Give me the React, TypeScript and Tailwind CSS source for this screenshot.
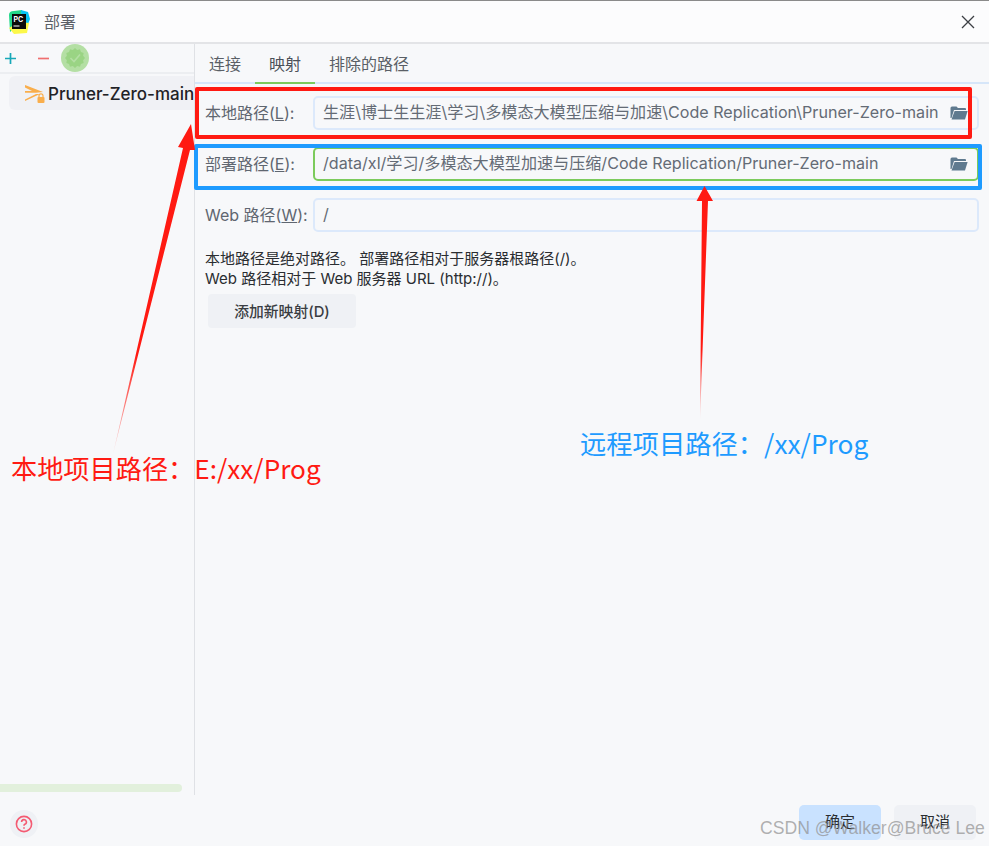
function PcLogo() {
  return (
    <svg width="22" height="24" viewBox="0 0 22 24">
      <path d="M1 5 Q1 1 6 1 L14 0 L13 12 L2 22 Z" fill="#21d789" />
      <path d="M13 0 L20 2 L22 9 L20 14 L14 12 Z" fill="#07c3f2" />
      <path d="M1 18 L11 12 L21 13 L19 23 L6 24 Z" fill="#fcf84a" />
      <rect x="4" y="4" width="14" height="15" fill="#0b0b0b" />
      <text x="5.500" y="11.500" fontSize="7" fontWeight="700" fill="#fff" fontFamily="Inter, sans-serif">PC</text>
      <rect x="5.500" y="15.500" width="6" height="1" fill="#fff" />
    </svg>
  );
}

function FolderIcon() {
  return (
    <svg className="shrink-0" width="18" height="14" viewBox="0 0 18 14">
      <path d="M0.5 2 Q0.5 0.5 2 0.5 H6.5 L8 2 H15 Q16 2 16 3 V4 H4 L1.5 12 H0.5 Z" fill="#5f7a8f" />
      <path d="M4.600 5 H17.600 L15 13.500 H1.500 Z" fill="#5f7a8f" />
    </svg>
  );
}

const badgePoints = Array.from({ length: 24 }, (_, i) => {
  const r = i % 2 === 0 ? 10 : 8.4;
  const a = (i * Math.PI) / 12;
  return `${14 + r * Math.cos(a)},${14 + r * Math.sin(a)}`;
}).join(" ");

function PathRow({ label, hotkey, value, focused, folder }: { label: string; hotkey: string; value: string; focused?: boolean; folder?: boolean }) {
  return (
    <div className="flex items-center h-[34px]">
      <div className="w-[118px] shrink-0 pl-[10px] pb-[1px] text-[16px] text-[#5f6670] whitespace-nowrap">
        {label}(<span className="underline">{hotkey}</span>):
      </div>
      <div className={`flex-1 min-w-0 h-[34px] mr-[10px] flex items-center justify-between pl-[8px] pr-[9px] rounded-[5px] text-[16.100px] text-[#646b75] whitespace-nowrap overflow-hidden ${focused ? "border-2 border-[#7ccb5c]" : "border-2 border-[#dce9fb]"}`}>
        <span className="pb-[2px]">{value}</span>
        {folder && <FolderIcon />}
      </div>
    </div>
  );
}

export default function App() {
  return (
    <div className="relative w-[989px] h-[846px] overflow-hidden flex flex-col bg-[#f7f8fa] font-['Inter','Noto_Sans_CJK_SC',sans-serif]">
      {/* title bar */}
      <div className="h-[44px] flex items-center justify-between bg-[#fcfcfd] border-t border-t-[#8a8a8a] border-b-2 border-b-[#e3e4e7] pl-[8px] pr-[14px]">
        <div className="flex items-center gap-[14px]">
          <PcLogo />
          <span className="text-[16px] text-[#5a5f66]">部署</span>
        </div>
        <svg width="14" height="14" viewBox="0 0 14 14" stroke="#3c3f44" strokeWidth="1.3">
          <path d="M1 1 L13 13 M13 1 L1 13" />
        </svg>
      </div>

      <div className="flex h-[751px]">
        {/* sidebar */}
        <div className="relative w-[195px] shrink-0 border-r border-[#dfe1e5]">
          <div className="h-[30px] flex items-center border-b-2 border-[#eceef1]">
            <svg className="ml-[3px]" width="15" height="15" viewBox="0 0 15 15" stroke="#17a8b8" strokeWidth="1.7">
              <path d="M7.500 2 V13 M2 7.500 H13" />
            </svg>
            <svg className="ml-[18px]" width="15" height="15" viewBox="0 0 15 15" stroke="#ef6f6f" strokeWidth="1.7">
              <path d="M2 7.500 H13" />
            </svg>
            <svg className="ml-[10px]" width="28" height="28" viewBox="0 0 28 28">
              <circle cx="14" cy="14" r="14" fill="#b4dfa4" />
              <polygon points={badgePoints} fill="#9ad484" />
              <path d="M9.500 14 L13 17.500 L19 10.500" fill="none" stroke="#b4dfa4" strokeWidth="1.600" />
            </svg>
          </div>
          <div className="ml-[9px] mt-[2px] h-[34px] flex items-center gap-[3px] rounded-l-[6px] bg-[#f0f1f5] pl-[15px] overflow-hidden whitespace-nowrap">
            <svg className="shrink-0" width="21" height="20" viewBox="0 0 21 20">
              <path d="M1 2 L19 9 L12 9.800 L1 9.800 L1 8 L8 8 L1 4.500 Z" fill="#f9ae4c" />
              <path d="M1 16.500 L12 11 L16 11 L1 18 Z" fill="#f9ae4c" />
              <rect x="13.500" y="14" width="7" height="6" rx="1" fill="#f9ae4c" />
              <path d="M15 14 V12.800 A2 2 0 0 1 19 12.800 V14" fill="none" stroke="#f9ae4c" strokeWidth="1.200" />
            </svg>
            <span className="pt-[3px] text-[17px] font-medium text-[#1f2226]">Pruner-Zero-main</span>
          </div>
          <div className="absolute left-0 top-[740px] w-[182px] h-[8px] rounded-r-full bg-[#e2f0dc]" />
        </div>

        {/* main panel */}
        <div className="flex-1 min-w-0 flex flex-col">
          <div className="h-[40px] flex items-end border-b-2 border-[#d6e6f9] text-[16px] text-[#5a5f66]">
            <div className="w-[60px] h-[36px] flex items-center justify-center">连接</div>
            <div className="w-[60px] h-[38px] -mb-[2px] flex items-center justify-center border-b-2 border-[#7ccb5c] text-[#4b5058]">映射</div>
            <div className="w-[108px] h-[36px] flex items-center justify-center">排除的路径</div>
          </div>
          <div className="mt-[12px] flex flex-col gap-[17px]">
            <PathRow label="本地路径" hotkey="L" value="生涯\博士生生涯\学习\多模态大模型压缩与加速\Code Replication\Pruner-Zero-main" folder />
            <PathRow label="部署路径" hotkey="E" value="/data/xl/学习/多模态大模型加速与压缩/Code Replication/Pruner-Zero-main" focused folder />
            <PathRow label="Web 路径" hotkey="W" value="/" />
          </div>
          <div className="mt-[17px] pl-[10px] text-[15px] leading-[20px] text-[#2a2d31]">
            <div>本地路径是绝对路径。 部署路径相对于服务器根路径(/)。</div>
            <div>Web 路径相对于 Web 服务器 URL (http://)。</div>
          </div>
          <button className="ml-[13px] mt-[5px] w-[148px] h-[34px] pt-[3px] rounded-[4px] bg-[#eff1f5] text-[14.800px] font-medium text-[#3a3d42]">
            添加新映射(D)
          </button>
        </div>
      </div>

      {/* footer */}
      <div className="flex-1 flex items-start justify-between pl-[10px] pr-[13px] pt-[10px]">
        <div className="mt-[5px] w-[28px] h-[28px] rounded-full bg-[#eff1f5] flex items-center justify-center">
          <svg width="18" height="18" viewBox="0 0 18 18" fill="none" stroke="#f45a72" strokeWidth="1.600">
            <circle cx="9" cy="9" r="7.600" />
            <path d="M6.600 7 A2.400 2.400 0 1 1 9.800 9.300 Q9 9.700 9 10.800" />
            <path d="M9 12.200 V13.800" />
          </svg>
        </div>
        <div className="flex gap-[13px] text-[15px] text-[#2a2d31]">
          <button className="w-[82px] h-[35px] rounded-[5px] bg-[#c9e2ff]">确定</button>
          <button className="w-[82px] h-[35px] rounded-[5px] bg-[#eff1f5]">取消</button>
        </div>
      </div>

      {/* annotations drawn on top of the screenshot */}
      <div className="absolute left-[195px] top-[87px] w-[777px] h-[52px] rounded-[2px] border-[4px] border-[#ff1a12]" />
      <div className="absolute left-[194px] top-[144px] w-[788px] h-[46px] rounded-[2px] border-[4px] border-[#1e9bff]" />
      <svg className="absolute left-0 top-0" width="989" height="846">
        <defs>
          <linearGradient id="fadeLeft" x1="0" y1="1" x2="0" y2="0">
            <stop offset="0" stopColor="#ff1a12" stopOpacity="0.1" />
            <stop offset="0.3" stopColor="#ff1a12" />
          </linearGradient>
          <linearGradient id="fadeRight" x1="0" y1="1" x2="0" y2="0">
            <stop offset="0" stopColor="#ff1a12" stopOpacity="0.1" />
            <stop offset="0.3" stopColor="#ff1a12" />
          </linearGradient>
        </defs>
        <path d="M113 454 L183 148 L178 147 L191 124 L195 150 L190 150 Z" fill="url(#fadeLeft)" />
        <path d="M700 420 L702 201 L696.500 201 L704.500 186 L713 201 L708 201 Z" fill="url(#fadeRight)" />
      </svg>
      <div className="absolute left-[11px] top-[449px] text-[26.200px] leading-[38px] text-[#ff1a12] whitespace-nowrap font-['Noto_Sans_CJK_SC',sans-serif]">本地项目路径：E:/xx/Prog</div>
      <div className="absolute left-[580px] top-[424px] text-[26.300px] leading-[38px] text-[#1e9bff] whitespace-nowrap font-['Noto_Sans_CJK_SC',sans-serif]">远程项目路径：/xx/Prog</div>
      <div className="absolute left-[760px] top-[816px] text-[17.600px] leading-[24px] text-[#8f8f8f]/70 whitespace-nowrap font-['Liberation_Sans',sans-serif]">CSDN @Walker@Bruce Lee</div>
    </div>
  );
}
